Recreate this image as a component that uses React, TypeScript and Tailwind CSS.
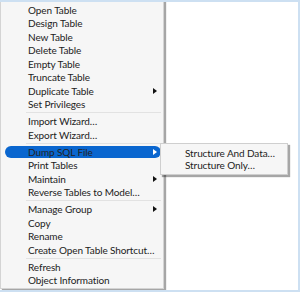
import React from 'react'

type Item = { label: string; sub?: boolean; active?: boolean } | 'sep'

const items: Item[] = [
  { label: 'Open Table' },
  { label: 'Design Table' },
  { label: 'New Table' },
  { label: 'Delete Table' },
  { label: 'Empty Table' },
  { label: 'Truncate Table' },
  { label: 'Duplicate Table', sub: true },
  { label: 'Set Privileges' },
  'sep',
  { label: 'Import Wizard…' },
  { label: 'Export Wizard…' },
  'sep',
  { label: 'Dump SQL File', sub: true, active: true },
  { label: 'Print Tables' },
  { label: 'Maintain', sub: true },
  { label: 'Reverse Tables to Model…' },
  'sep',
  { label: 'Manage Group', sub: true },
  { label: 'Copy' },
  { label: 'Rename' },
  { label: 'Create Open Table Shortcut…' },
  'sep',
  { label: 'Refresh' },
  { label: 'Object Information' },
]

function Arrow({ white }: { white?: boolean }) {
  return (
    <svg width="4" height="6" viewBox="0 0 4 6" className="shrink-0">
      <path d="M0 0 L4 3 L0 6 Z" fill={white ? '#ffffff' : '#111111'} />
    </svg>
  )
}

export default function App() {
  return (
    <div
      className="relative w-[300px] h-[292px] bg-white border-t-2 border-r-2 border-b-2 border-[#cde0f2] overflow-hidden"
      style={{ fontFamily: 'Lato, "Liberation Sans", sans-serif' }}
    >
      {/* Main context menu */}
      <div className="relative z-10 -mt-[2px] w-[164px] pt-[2px] pb-[1px] bg-[#f6f6f6] border border-[#d4d4d4] shadow-[2px_2px_1px_rgba(0,0,0,0.35)] flex flex-col">
        {items.map((it, i) =>
          it === 'sep' ? (
            <div key={i} className="h-[3.5px] flex items-center pl-[25px] pr-[2px]">
              <div className="h-px w-full bg-[#e2e2e2]" />
            </div>
          ) : (
            <div key={i} className="h-[13.5px] py-[1px] flex">
              <div
                className={
                  'flex-1 flex items-center justify-between ml-[4px] mr-[2px] pl-[23px] pr-[4px] rounded-full ' +
                  (it.active ? 'bg-[#0a66cf]' : '')
                }
              >
                <span className="text-[10px] leading-none tracking-[-0.1px] text-[#222] whitespace-nowrap">{it.label}</span>
                {it.sub && <Arrow white={it.active} />}
              </div>
            </div>
          )
        )}
      </div>

      {/* Submenu */}
      <div className="absolute z-20 left-[160px] top-[141px] w-[128px] py-[3px] bg-[#f6f6f6] border border-[#cfcfcf] shadow-[2px_2px_1px_rgba(0,0,0,0.35)] flex flex-col">
        {['Structure And Data…', 'Structure Only…'].map((s) => (
          <div key={s} className="h-[12px] flex items-center pl-[24px] text-[10px] leading-none tracking-[-0.1px] text-[#222] whitespace-nowrap">
            {s}
          </div>
        ))}
      </div>
    </div>
  )
}
